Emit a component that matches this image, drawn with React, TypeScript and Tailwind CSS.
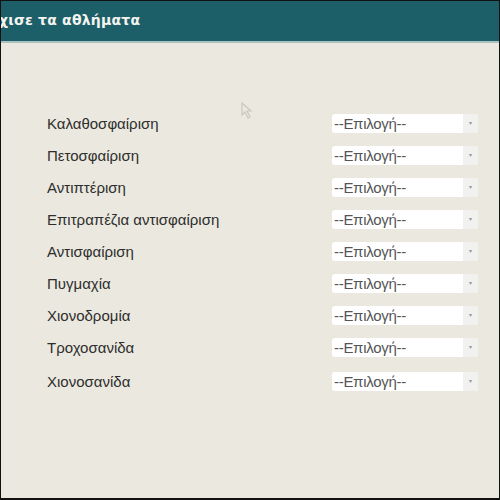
import React from "react";

const sports = [
  "Καλαθοσφαίριση",
  "Πετοσφαίριση",
  "Αντιπτέριση",
  "Επιτραπέζια αντισφαίριση",
  "Αντισφαίριση",
  "Πυγμαχία",
  "Χιονοδρομία",
  "Τροχοσανίδα",
  "Χιονοσανίδα",
];

function Select() {
  return (
    <div className="flex h-[19px] w-[146px] items-center rounded-[3px] bg-white">
      <span className="flex-1 pl-[2px] text-[15px] leading-none tracking-[-0.3px] text-[#555]">--Επιλογή--</span>
      <div className="flex h-full w-[15px] items-center justify-center rounded-r-[3px] bg-[#f1f1ef]">
        <span className="text-[6px] text-[#999]">▾</span>
      </div>
    </div>
  );
}

export default function App() {
  return (
    <div className="relative h-[500px] w-[500px] overflow-hidden border border-b-2 border-[#111] bg-[#ebe9df] font-['Liberation_Sans',Arial,sans-serif]">
      <header className="flex h-[42px] items-center border-b-2 border-[#a9c2c0] bg-[#1d5f69] pb-[2px]">
        <h1 className="ml-[-2px] text-[14px] font-bold tracking-[0.2px] text-[#f4f4f0] font-['DejaVu_Sans',sans-serif]">
          χισε τα αθλήματα
        </h1>
      </header>

      <div className="flex flex-col pt-[64px]">
        {sports.map((s, i) => (
          <div key={s} className={`flex h-8 items-center ${i === sports.length - 1 ? "mt-[2px]" : ""}`}>
            <span className="w-[331px] shrink-0 pl-[46px] pt-[3px] text-[15px] text-[#2e2e2e]">{s}</span>
            <Select />
          </div>
        ))}
      </div>

      {/* faint mouse cursor */}
      <svg className="absolute left-[240px] top-[101px]" width="12" height="18" viewBox="0 0 12 18">
        <path d="M1 1 L1 13 L4 10 L7 16 L9 15 L6 9 L10 9 Z" fill="none" stroke="#c9c8c0" strokeWidth="1.2" />
      </svg>
    </div>
  );
}
